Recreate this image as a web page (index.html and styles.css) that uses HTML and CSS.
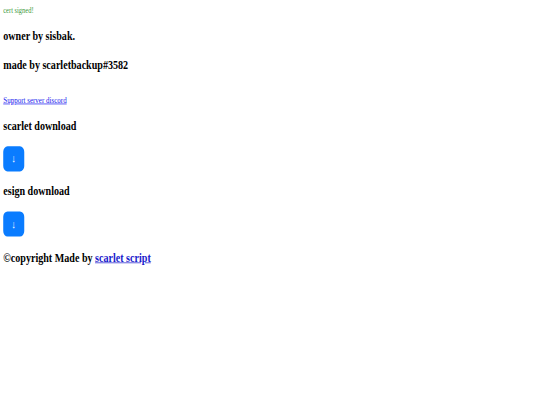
FILE: index.html
```html
<!DOCTYPE html>
<html>
<head>
<meta charset="utf-8">
<link rel="stylesheet" href="styles.css">
</head>
<body>
<div class="page">
  <div class="cert">cert signed!</div>
  <h3 class="title">owner by sisbak.</h3>
  <h3 class="title">made by scarletbackup#3582</h3>
  <div class="support"><br><a href="#">Support server discord</a></div>
  <h3 class="title">scarlet download</h3>
  <a class="dl-btn" href="#">↓</a>
  <h3 class="title">esign download</h3>
  <a class="dl-btn dl-btn-last" href="#">↓</a>
  <h3 class="title">©copyright Made by <a href="#">scarlet script</a></h3>
</div>
</body>
</html>
```
FILE: styles.css
```css
html, body {
  margin: 0;
  padding: 0;
  background: #ffffff;
}
body {
  font-family: "Liberation Serif", "Times New Roman", serif;
  font-size: 16px;
  color: #000;
}
.page {
  padding: 8px 6px;
  transform: scale(0.539, 0.7);
  transform-origin: 0 0;
}
.cert {
  font-size: 12px;
  color: #3a9a3a;
  margin-bottom: -1.4px;
}
.title {
  font-size: 18.72px;
  font-weight: bold;
  margin: 18.72px 0;
}
.title a {
  color: #1a1acc;
}
.support {
  font-size: 13px;
  margin: -2.6px 0 -1.5px;
}
.support a {
  color: #1a1aee;
}
.dl-btn {
  display: flex;
  align-items: center;
  justify-content: center;
  width: 39px;
  height: 36px;
  margin-bottom: -2.8px;
  border-radius: 8px;
  background: #0a7cff;
  color: #fff;
  text-decoration: none;
  font-size: 16px;
}
.dl-btn-last {
  margin-bottom: 19px;
}
```
